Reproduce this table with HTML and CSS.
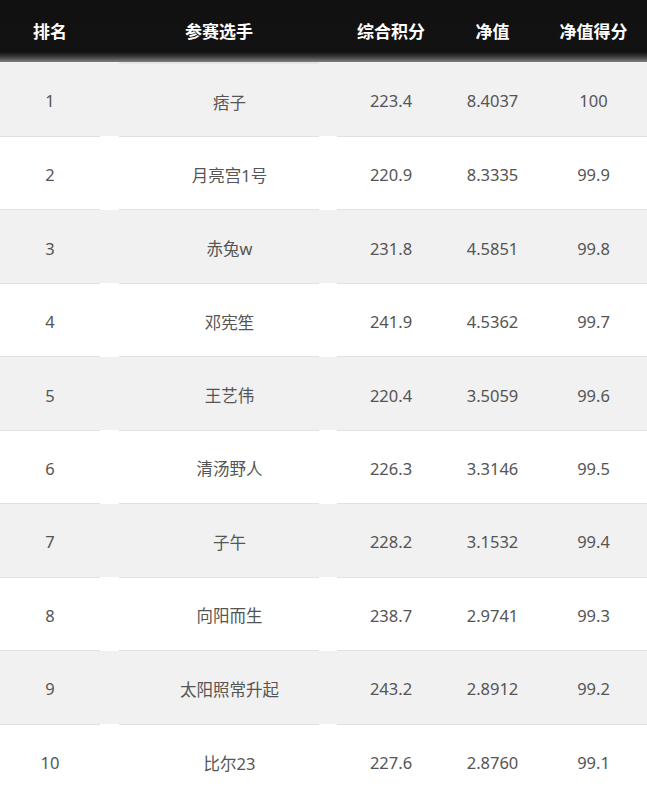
FILE: index.html
```html
<!DOCTYPE html>
<html lang="zh">
<head>
<meta charset="utf-8">
<title>排名</title>
<link rel="stylesheet" href="styles.css">
</head>
<body>
<div class="board">
  <div class="head">
    <div class="c c1">排名</div>
    <div class="c c2">参赛选手</div>
    <div class="c c3">综合积分</div>
    <div class="c c4">净值</div>
    <div class="c c5">净值得分</div>
  </div>
  <div class="row odd first">
    <div class="c c1">1</div><div class="c c2">痞子</div><div class="c c3">223.4</div><div class="c c4">8.4037</div><div class="c c5">100</div>
  </div>
  <div class="row">
    <div class="c c1">2</div><div class="c c2">月亮宫1号</div><div class="c c3">220.9</div><div class="c c4">8.3335</div><div class="c c5">99.9</div>
  </div>
  <div class="row odd">
    <div class="c c1">3</div><div class="c c2">赤兔w</div><div class="c c3">231.8</div><div class="c c4">4.5851</div><div class="c c5">99.8</div>
  </div>
  <div class="row">
    <div class="c c1">4</div><div class="c c2">邓宪笙</div><div class="c c3">241.9</div><div class="c c4">4.5362</div><div class="c c5">99.7</div>
  </div>
  <div class="row odd">
    <div class="c c1">5</div><div class="c c2">王艺伟</div><div class="c c3">220.4</div><div class="c c4">3.5059</div><div class="c c5">99.6</div>
  </div>
  <div class="row">
    <div class="c c1">6</div><div class="c c2">清汤野人</div><div class="c c3">226.3</div><div class="c c4">3.3146</div><div class="c c5">99.5</div>
  </div>
  <div class="row odd">
    <div class="c c1">7</div><div class="c c2">子午</div><div class="c c3">228.2</div><div class="c c4">3.1532</div><div class="c c5">99.4</div>
  </div>
  <div class="row">
    <div class="c c1">8</div><div class="c c2">向阳而生</div><div class="c c3">238.7</div><div class="c c4">2.9741</div><div class="c c5">99.3</div>
  </div>
  <div class="row odd">
    <div class="c c1">9</div><div class="c c2">太阳照常升起</div><div class="c c3">243.2</div><div class="c c4">2.8912</div><div class="c c5">99.2</div>
  </div>
  <div class="row last">
    <div class="c c1">10</div><div class="c c2">比尔23</div><div class="c c3">227.6</div><div class="c c4">2.8760</div><div class="c c5">99.1</div>
  </div>
</div>
</body>
</html>
```
FILE: styles.css
```css
* { box-sizing: border-box; }
html, body { margin: 0; padding: 0; background: #fff; }
body {
  font-family: "Noto Sans", "Noto Sans CJK SC", sans-serif;
  font-size: 16.5px;
  color: #555;
  width: 647px;
  height: 798px;
  overflow: hidden;
}
.board { width: 647px; }
.head, .row {
  display: grid;
  grid-template-columns: 100px 19px 200px 18px 108px 95px 107px;
}
.head {
  height: 62px;
  background: linear-gradient(to bottom, #111 0, #121212 52px, #333 56px, #7f7f7f 62px);
  color: #fff;
  font-size: 17px;
  font-weight: 700;
  align-items: center;
}
.head .c { padding-bottom: 2px; }
.c { text-align: center; display: flex; align-items: center; justify-content: center; white-space: nowrap; }
.c1 { grid-column: 1; }
.c2 { grid-column: 3; }
.c3 { grid-column: 5; }
.c4 { grid-column: 6; }
.c5 { grid-column: 7; }
.row { height: 73.44px; }
.row .c { border-bottom: 1px solid #e1e1e1; padding-top: 3px; }
.row .c2 { border-bottom-color: #dfe1e6; padding-left: 21px; }
.row.odd { background: linear-gradient(to bottom, #f1f1f1 calc(100% - 1px), #fff 0); }
.row.first { height: 75px; }
.row.first .c2 { border-top: 2px solid #e3e5ea; }
.row.last .c { border-bottom: none; }
```
